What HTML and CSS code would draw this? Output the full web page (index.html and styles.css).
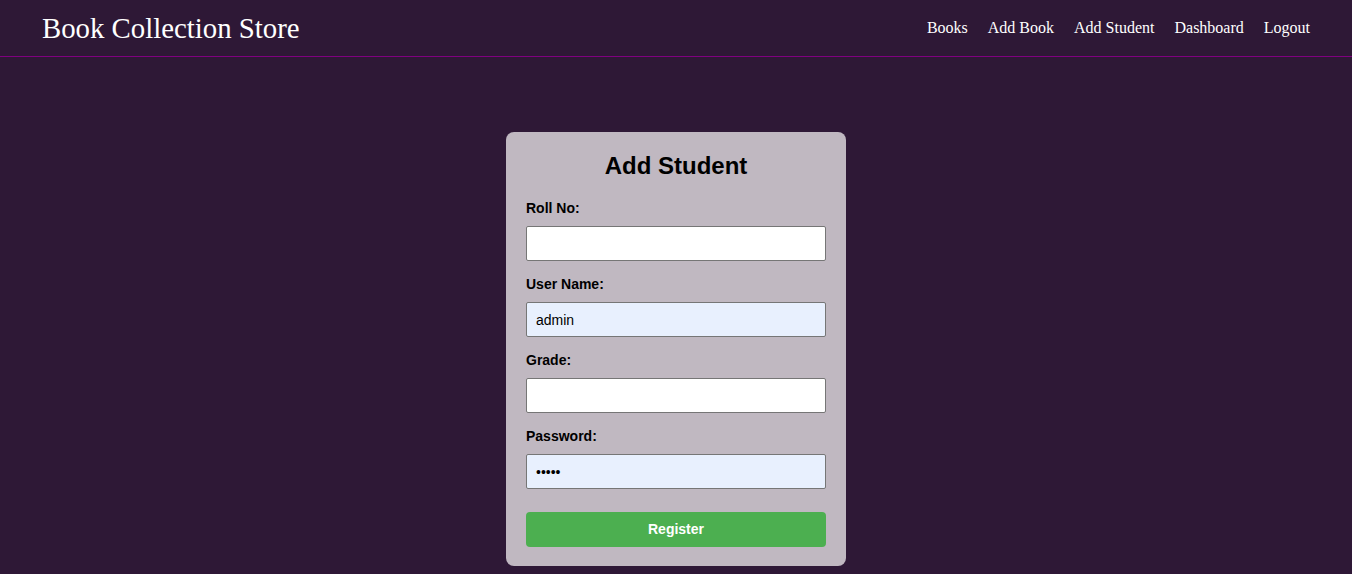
FILE: index.html
```html
<!DOCTYPE html>
<html lang="en">
<head>
<meta charset="utf-8">
<title>Book Collection Store</title>
<link rel="stylesheet" href="styles.css">
</head>
<body>
<header class="navbar">
  <div class="brand">Book Collection Store</div>
  <nav class="nav-links">
    <a href="#">Books</a>
    <a href="#">Add Book</a>
    <a href="#">Add Student</a>
    <a href="#">Dashboard</a>
    <a href="#">Logout</a>
  </nav>
</header>
<main class="content">
  <form class="card">
    <h2 class="card-title">Add Student</h2>
    <label class="field-label" for="roll">Roll No:</label>
    <input class="field-input" id="roll" type="text">
    <label class="field-label" for="username">User Name:</label>
    <input class="field-input filled" id="username" type="text" value="admin">
    <label class="field-label" for="grade">Grade:</label>
    <input class="field-input" id="grade" type="text">
    <label class="field-label" for="password">Password:</label>
    <input class="field-input filled" id="password" type="password" value="admin">
    <button class="btn-register" type="button">Register</button>
  </form>
</main>
</body>
</html>
```
FILE: styles.css
```css
html, body {
  margin: 0;
  padding: 0;
  background: #2e1836;
  min-height: 100%;
}
body {
  font-family: "Liberation Serif", "Times New Roman", serif;
}
.navbar {
  height: 56px;
  border-bottom: 1px solid #800080;
  display: flex;
  align-items: center;
  justify-content: space-between;
  padding: 0 42px;
}
.brand {
  color: #fff;
  font-size: 28.8px;
  line-height: 1;
  padding-top: 1px;
}
.nav-links {
  display: flex;
  gap: 20px;
}
.nav-links a {
  color: #fff;
  text-decoration: none;
  font-size: 16px;
}
.content {
  display: flex;
  justify-content: center;
  padding-top: 75px;
}
.card {
  width: 300px;
  background: #c0b8c1;
  border-radius: 8px;
  padding: 20px 20px 19px;
  display: flex;
  flex-direction: column;
  font-family: "Liberation Sans", Arial, sans-serif;
}
.card-title {
  margin: 0 0 20px;
  text-align: center;
  font-size: 24px;
  line-height: 28px;
  font-weight: bold;
  color: #000;
}
.field-label {
  display: block;
  font-size: 14px;
  line-height: 16px;
  font-weight: bold;
  color: #000;
  margin-bottom: 10px;
}
.field-input {
  box-sizing: border-box;
  width: 300px;
  height: 35px;
  margin: 0 0 15px;
  padding: 0 9px;
  border: 1px solid #767676;
  border-radius: 2px;
  background: #fff;
  font-family: "Liberation Sans", Arial, sans-serif;
  font-size: 14px;
  color: #000;
}
.field-input.filled {
  background: #e8f0fe;
}
.btn-register {
  margin-top: 8px;
  height: 35px;
  width: 300px;
  padding: 0 0 2px;
  border: none;
  border-radius: 4px;
  background: #4caf50;
  color: #fff;
  font-family: "Liberation Sans", Arial, sans-serif;
  font-size: 14px;
  font-weight: bold;
  cursor: pointer;
}
```
